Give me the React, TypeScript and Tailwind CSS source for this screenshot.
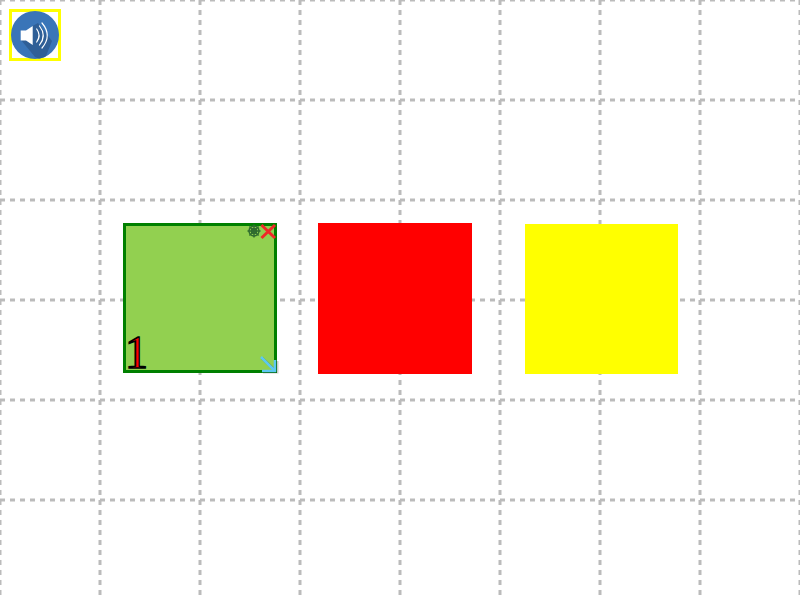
import React from 'react'

const cols = [0, 100, 200, 300, 400, 500, 600, 700, 800]
const rows = [0, 100, 200, 300, 400, 500]

function GridLines() {
  return (
    <svg width="800" height="600" className="absolute inset-0">
      {cols.map((x) => (
        <line key={x} x1={x} y1="0" x2={x} y2="600" stroke="#bbbbbb" strokeWidth="3" strokeDasharray="5 5" />
      ))}
      {rows.map((y) => (
        <line key={y} x1="0" y1={y} x2="800" y2={y} stroke="#bbbbbb" strokeWidth="3" strokeDasharray="5 5" />
      ))}
    </svg>
  )
}

function SpeakerIcon() {
  return (
    <svg width="48" height="48" viewBox="0 0 48 48" className="shrink-0">
      <defs>
        <clipPath id="disc">
          <circle cx="24" cy="24" r="24" />
        </clipPath>
      </defs>
      <circle cx="24" cy="24" r="24" fill="#3a75b8" />
      <path d="M10 29 L21.5 15 L27 12 L41 30 L33 50 L24 46 Z" fill="#2f5f97" clipPath="url(#disc)" />
      <path d="M9.7 19.5 H15 L21.7 15 V34 L15 29.5 H9.7 Z" fill="#ffffff" />
      <g fill="none" stroke="#ffffff" strokeWidth="1.2" strokeLinecap="round">
        <path d="M25.7 18 Q30.5 24.5 25.7 31" />
        <path d="M28.5 15 Q36 24.5 28.5 34" />
        <path d="M31 12 Q41.5 24.5 31 37" />
      </g>
    </svg>
  )
}

export default function App() {
  return (
    <div className="relative w-[800px] h-[600px] bg-white overflow-hidden font-['Liberation_Sans',sans-serif]">
      <GridLines />

      <div className="absolute left-[9px] top-[9px] w-[52px] h-[52px] border-[3px] border-[#ffff00] flex items-center justify-center">
        <SpeakerIcon />
      </div>

      <div className="absolute left-[123px] top-[223px] w-[154px] h-[150px] bg-[#92d050] border-[3px] border-[#008000]">
        <svg width="32" height="20" viewBox="0 0 32 20" className="absolute right-[-4px] top-[-4px]">
          <g fill="none" stroke="#2f6b2f" strokeWidth="1.4">
            <circle cx="8" cy="9" r="5" />
            <circle cx="8" cy="9" r="2.5" />
            <path d="M8 2.5 V15.5 M1.5 9 H14.5 M3.4 4.4 L12.6 13.6 M12.6 4.4 L3.4 13.6" />
          </g>
          <path d="M15.5 3 L29 16 M29 3 L15.5 16" stroke="#f02828" strokeWidth="3" fill="none" />
        </svg>
        <span className="absolute left-[-1px] bottom-[-6px] text-[46px] leading-[46px] text-[#ff0000] font-['Liberation_Serif',serif] [-webkit-text-stroke:1.5px_#000000]">1</span>
        <svg width="24" height="24" viewBox="0 0 24 24" className="absolute right-[-6px] bottom-[-6px]">
          <path d="M6 6 L21 20 M21 9 V20 H7" stroke="#000000" strokeOpacity="0.2" strokeWidth="3" fill="none" />
          <path d="M5 5 L19 19 M19 8 V19 H6" stroke="#5cc8f2" strokeWidth="2.5" fill="none" />
        </svg>
      </div>

      <div className="absolute left-[318px] top-[223px] w-[154px] h-[151px] bg-[#ff0000]" />
      <div className="absolute left-[525px] top-[224px] w-[153px] h-[150px] bg-[#ffff00]" />
    </div>
  )
}
